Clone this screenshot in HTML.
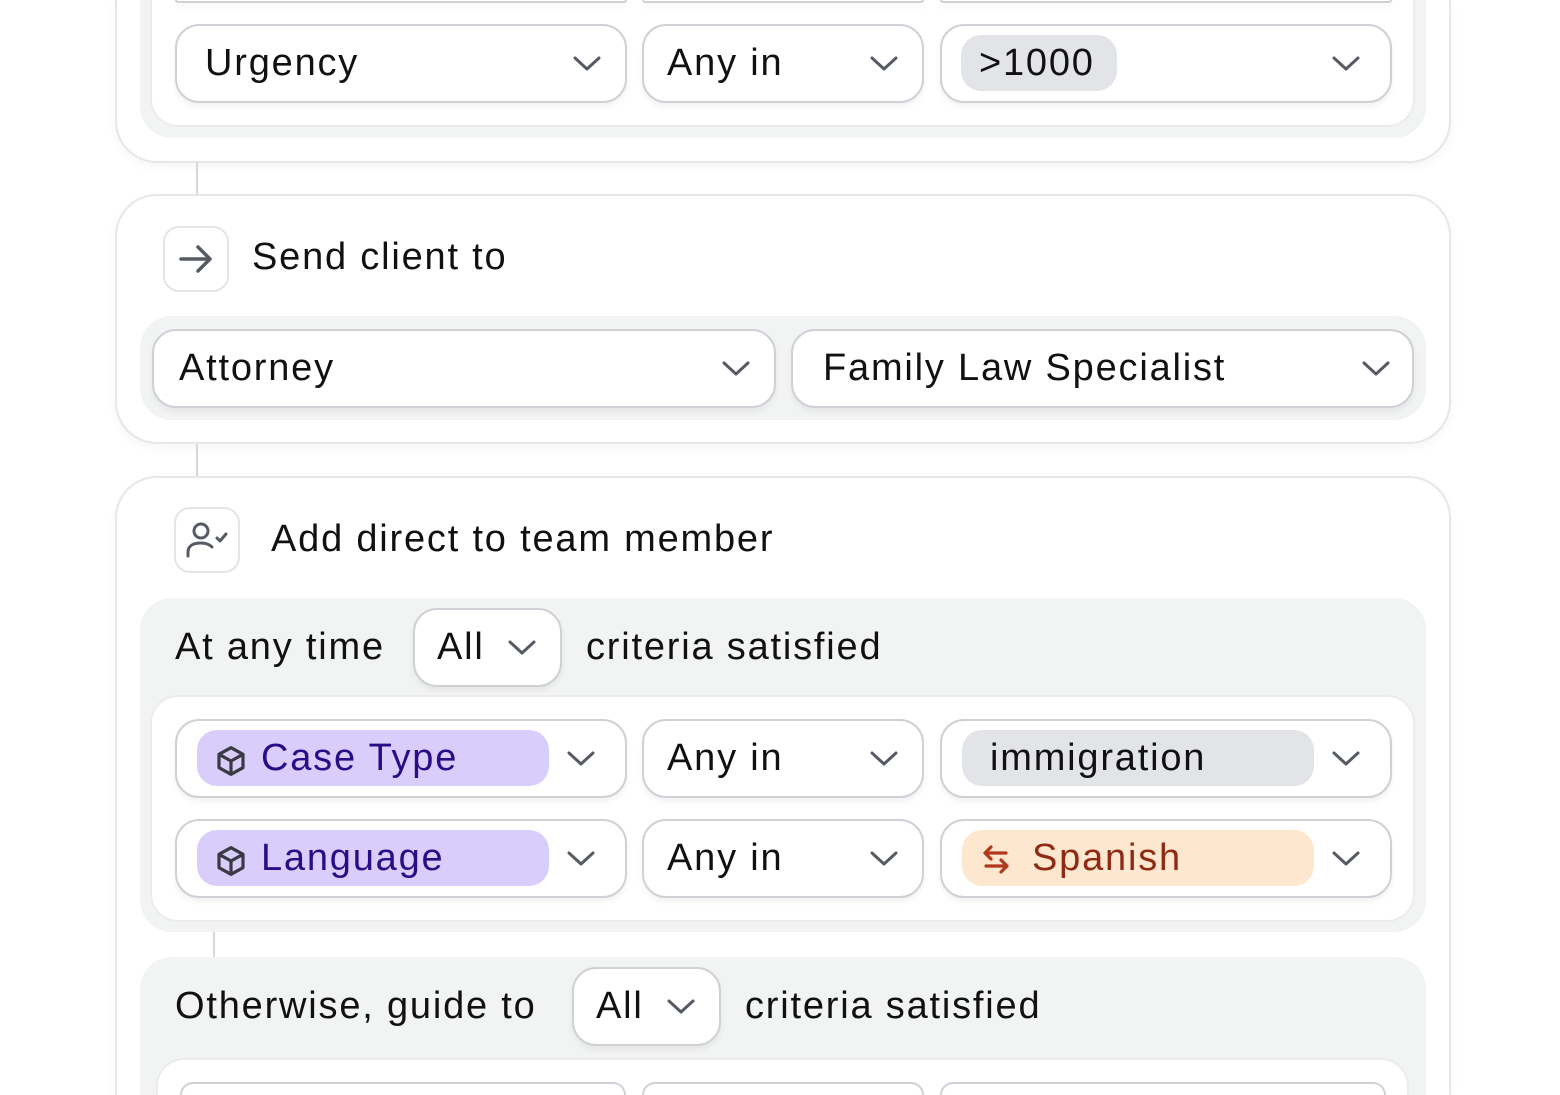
<!DOCTYPE html>
<html><head><style>
*{box-sizing:border-box;margin:0;padding:0}
html,body{width:1560px;height:1095px;overflow:hidden}
body{background:#fff;position:relative;font-family:"Liberation Sans",sans-serif;color:#111;letter-spacing:1.8px}
#w{position:absolute;left:0;top:0;width:1560px;height:1095px;overflow:hidden}
.card{position:absolute;left:115px;width:1336px;border:2px solid #e6e7e9;border-radius:42px;background:#fff;box-shadow:0 4px 10px rgba(0,0,0,0.04)}
.panel{position:absolute;background:#f2f3f3;border-radius:32px}
.inner{position:absolute;background:#fff;border-radius:26px;box-shadow:0 0 0 2px #ececee}
.dd{position:absolute;height:79px;border:2.5px solid #cfd1d7;border-radius:24px;background:#fff;box-shadow:0 4px 6px rgba(0,0,0,0.05);font-size:38px;line-height:74px;padding-left:23px;white-space:nowrap}
.chev{position:absolute;top:50%;width:28px;height:16px;margin-top:-8px}
.chip{position:absolute;top:9px;height:56px;border-radius:20px;line-height:56px}
.line{position:absolute;width:2px;background:#d7d8db}
.ibox{position:absolute;width:66px;height:66px;border:2px solid #e4e5e8;border-radius:16px;background:#fff}
.t{position:absolute;font-size:38px;white-space:nowrap}
</style></head><body>
<svg width="0" height="0" style="position:absolute"><defs>
<symbol id="cv" viewBox="0 0 28 16"><path d="M2 2 L14 13 L26 2" fill="none" stroke="#555a63" stroke-width="3" stroke-linecap="round" stroke-linejoin="round"/></symbol>
<symbol id="cube" viewBox="0 0 24 24"><path d="M12 2 L21 7 V17 L12 22 L3 17 V7 Z M3 7 L12 12 L21 7 M12 12 V22" fill="none" stroke="#3a3a44" stroke-width="2.4" stroke-linejoin="round"/></symbol>
</defs></svg>
<div id="w">
<div class="card" style="top:0;height:163px;border-top:none;border-radius:0 0 42px 42px"></div>
<div class="panel" style="left:140px;top:0;width:1286px;height:138px;border-radius:0 0 32px 32px"></div>
<div class="inner" style="left:152px;top:0;width:1261px;height:125px;border-radius:0 0 26px 26px"></div>
<div class="dd" style="left:175px;top:0;width:452px;height:3px;border-top:none;border-radius:0 0 24px 24px"></div>
<div class="dd" style="left:642px;top:0;width:282px;height:3px;border-top:none;border-radius:0 0 24px 24px"></div>
<div class="dd" style="left:940px;top:0;width:452px;height:3px;border-top:none;border-radius:0 0 24px 24px"></div>
<div class="dd" style="left:175px;top:24px;width:452px;padding-left:28px">Urgency<svg class="chev" style="right:24px"><use href="#cv"/></svg></div>
<div class="dd" style="left:642px;top:24px;width:282px">Any in<svg class="chev" style="right:24px"><use href="#cv"/></svg></div>
<div class="dd" style="left:940px;top:24px;width:452px"><div class="chip" style="left:19px;width:156px;background:#e3e4e8;padding-left:18px">&gt;1000</div><svg class="chev" style="right:30px"><use href="#cv"/></svg></div>

<div class="line" style="left:196px;top:162px;height:34px"></div>

<div class="card" style="top:194px;height:250px"></div>
<div class="ibox" style="left:163px;top:226px"><svg width="66" height="66" viewBox="0 0 66 66" style="position:absolute;left:-2px;top:-2px"><path d="M18 33 H46 M35 21 L47 33 L35 45" fill="none" stroke="#555a63" stroke-width="3.5" stroke-linecap="round" stroke-linejoin="round"/></svg></div>
<div class="t" style="left:252px;top:236px">Send client to</div>
<div class="panel" style="left:140px;top:316px;width:1286px;height:104px"></div>
<div class="dd" style="left:152px;top:329px;width:624px;padding-left:25px">Attorney<svg class="chev" style="right:24px"><use href="#cv"/></svg></div>
<div class="dd" style="left:791px;top:329px;width:623px;padding-left:30px">Family Law Specialist<svg class="chev" style="right:22px"><use href="#cv"/></svg></div>

<div class="line" style="left:196px;top:444px;height:34px"></div>

<div class="card" style="top:476px;height:619px;border-bottom:none;border-radius:42px 42px 0 0"></div>
<div class="ibox" style="left:174px;top:507px"><svg width="66" height="66" viewBox="0 0 66 66" style="position:absolute;left:-2px;top:-2px"><circle cx="27" cy="24" r="7" fill="none" stroke="#555a63" stroke-width="3"/><path d="M14 49 V45 C14 39 19 36 27 36 C33 36 36 38 38 40" fill="none" stroke="#555a63" stroke-width="3" stroke-linecap="round"/><path d="M43 31 L46 34 L52 27" fill="none" stroke="#555a63" stroke-width="3" stroke-linecap="round" stroke-linejoin="round"/></svg></div>
<div class="t" style="left:271px;top:518px">Add direct to team member</div>

<div class="panel" style="left:140px;top:598px;width:1286px;height:334px"></div>
<div class="t" style="left:175px;top:626px">At any time</div>
<div class="dd" style="left:413px;top:608px;width:149px;padding-left:22px">All<svg class="chev" style="right:24px"><use href="#cv"/></svg></div>
<div class="t" style="left:586px;top:626px">criteria satisfied</div>
<div class="inner" style="left:152px;top:697px;width:1261px;height:223px"></div>
<div class="dd" style="left:175px;top:719px;width:452px"><div class="chip" style="left:20px;width:352px;background:#d9cdfb;color:#2a0c86;padding-left:64px">Case Type</div><svg style="position:absolute;left:38px;top:24px" width="32" height="32"><use href="#cube"/></svg><svg class="chev" style="right:30px"><use href="#cv"/></svg></div>
<div class="dd" style="left:642px;top:719px;width:282px">Any in<svg class="chev" style="right:24px"><use href="#cv"/></svg></div>
<div class="dd" style="left:940px;top:719px;width:452px"><div class="chip" style="left:20px;width:352px;background:#e3e4e8;padding-left:28px">immigration</div><svg class="chev" style="right:30px"><use href="#cv"/></svg></div>
<div class="dd" style="left:175px;top:819px;width:452px"><div class="chip" style="left:20px;width:352px;background:#d9cdfb;color:#2a0c86;padding-left:64px">Language</div><svg style="position:absolute;left:38px;top:24px" width="32" height="32"><use href="#cube"/></svg><svg class="chev" style="right:30px"><use href="#cv"/></svg></div>
<div class="dd" style="left:642px;top:819px;width:282px">Any in<svg class="chev" style="right:24px"><use href="#cv"/></svg></div>
<div class="dd" style="left:940px;top:819px;width:452px"><div class="chip" style="left:20px;width:352px;background:#fde8cf;color:#8f2a14;padding-left:70px">Spanish</div><svg style="position:absolute;left:38px;top:23px" width="32" height="32" viewBox="0 0 32 32"><path d="M26 9 H5 M11 3 L5 9 L11 15 M6 22 H27 M21 16 L27 22 L21 28" fill="none" stroke="#b13a1e" stroke-width="3.2" stroke-linecap="round" stroke-linejoin="round"/></svg><svg class="chev" style="right:30px"><use href="#cv"/></svg></div>

<div class="line" style="left:213px;top:932px;height:26px"></div>

<div class="panel" style="left:140px;top:957px;width:1286px;height:138px;border-radius:32px 32px 0 0"></div>
<div class="t" style="left:175px;top:985px">Otherwise, guide to</div>
<div class="dd" style="left:572px;top:967px;width:149px;padding-left:22px">All<svg class="chev" style="right:24px"><use href="#cv"/></svg></div>
<div class="t" style="left:745px;top:985px">criteria satisfied</div>
<div class="inner" style="left:158px;top:1060px;width:1249px;height:35px;border-radius:26px 26px 0 0"></div>
<div class="dd" style="left:180px;top:1082px;width:446px;height:13px;border-bottom:none;border-radius:24px 24px 0 0;box-shadow:none"></div>
<div class="dd" style="left:642px;top:1082px;width:282px;height:13px;border-bottom:none;border-radius:24px 24px 0 0;box-shadow:none"></div>
<div class="dd" style="left:940px;top:1082px;width:446px;height:13px;border-bottom:none;border-radius:24px 24px 0 0;box-shadow:none"></div>
</div>
</body></html>
